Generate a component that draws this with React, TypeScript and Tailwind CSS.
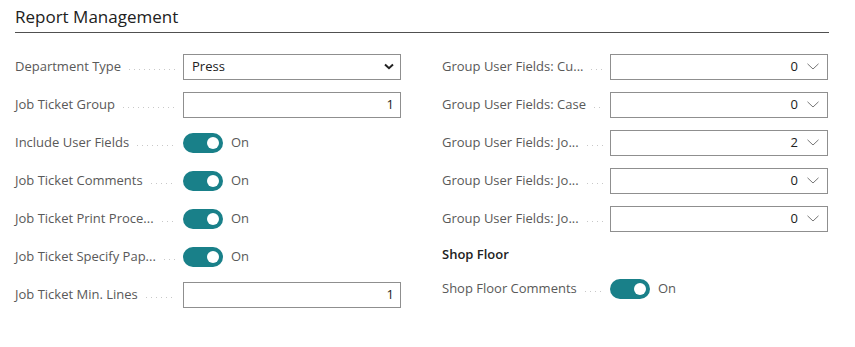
import React from 'react'

const font = { fontFamily: '"Segoe UI", "Open Sans", "Noto Sans", sans-serif' }

const Label = ({ text }: { text: string }) => (
  <div className="flex w-[168px] shrink-0 items-center pr-[7px]">
    <span className="whitespace-nowrap text-[13px] text-[#595959]">{text}</span>
    <span className="ml-[8px] mt-[5px] h-[1px] flex-1 bg-[linear-gradient(to_right,#c8c8c8_1px,transparent_1px)] bg-[length:5px_1px] bg-repeat-x" />
  </div>
)

const Toggle = () => (
  <div className="flex items-center">
    <div className="flex h-[20px] w-[40px] items-center justify-end rounded-full bg-[#198089] pr-[4px]">
      <div className="h-[12px] w-[12px] rounded-full bg-white" />
    </div>
    <span className="ml-[8px] text-[13px] text-[#595959]">On</span>
  </div>
)

const TextBox = ({ value }: { value: string }) => (
  <div className="flex h-[26px] w-[218px] items-center justify-end border border-[#8f8f8f] bg-white px-[6px] text-[13px] text-[#212121]">
    {value}
  </div>
)

const NativeSelect = ({ value }: { value: string }) => (
  <div className="flex h-[26px] w-[218px] items-center justify-between border border-[#8f8f8f] bg-white pl-[8px] pr-[6px] text-[13px] text-[#212121]">
    <span>{value}</span>
    <svg width="10" height="7" viewBox="0 0 10 7">
      <path d="M1 1.5 L5 5.2 L9 1.5" fill="none" stroke="#222" strokeWidth="2" />
    </svg>
  </div>
)

const Lookup = ({ value }: { value: string }) => (
  <div className="flex h-[26px] w-[218px] items-center justify-end border border-[#8f8f8f] bg-white pr-[8px] text-[13px] text-[#212121]">
    <span>{value}</span>
    <svg className="ml-[9px]" width="12" height="7" viewBox="0 0 12 7">
      <path d="M0.5 0.8 L6 6 L11.5 0.8" fill="none" stroke="#777" strokeWidth="1" />
    </svg>
  </div>
)

const Row = ({ label, children }: { label: string; children: React.ReactNode }) => (
  <div className="flex h-[38px] items-center">
    <Label text={label} />
    {children}
  </div>
)

export default function App() {
  return (
    <div className="min-h-[347px] w-[855px] bg-white" style={font}>
      <div className="pl-[15px] pt-[4px]">
        <div className="w-[814px] border-b border-[#505050] pb-[2px]">
          <h2 className="text-[17px] font-normal text-[#212121]">Report Management</h2>
        </div>
        <div className="mt-[15px] flex gap-[41px]">
          <div className="w-[386px]">
            <Row label="Department Type">
              <NativeSelect value="Press" />
            </Row>
            <Row label="Job Ticket Group">
              <TextBox value="1" />
            </Row>
            <Row label="Include User Fields">
              <Toggle />
            </Row>
            <Row label="Job Ticket Comments">
              <Toggle />
            </Row>
            <Row label="Job Ticket Print Proce...">
              <Toggle />
            </Row>
            <Row label="Job Ticket Specify Pap...">
              <Toggle />
            </Row>
            <Row label="Job Ticket Min. Lines">
              <TextBox value="1" />
            </Row>
          </div>
          <div className="w-[387px]">
            <Row label="Group User Fields: Cu...">
              <Lookup value="0" />
            </Row>
            <Row label="Group User Fields: Case">
              <Lookup value="0" />
            </Row>
            <Row label="Group User Fields: Jo...">
              <Lookup value="2" />
            </Row>
            <Row label="Group User Fields: Jo...">
              <Lookup value="0" />
            </Row>
            <Row label="Group User Fields: Jo...">
              <Lookup value="0" />
            </Row>
            <div className="flex h-[32px] items-center pt-[2px] text-[13px] font-semibold text-[#212121]">Shop Floor</div>
            <Row label="Shop Floor Comments">
              <Toggle />
            </Row>
          </div>
        </div>
      </div>
    </div>
  )
}
